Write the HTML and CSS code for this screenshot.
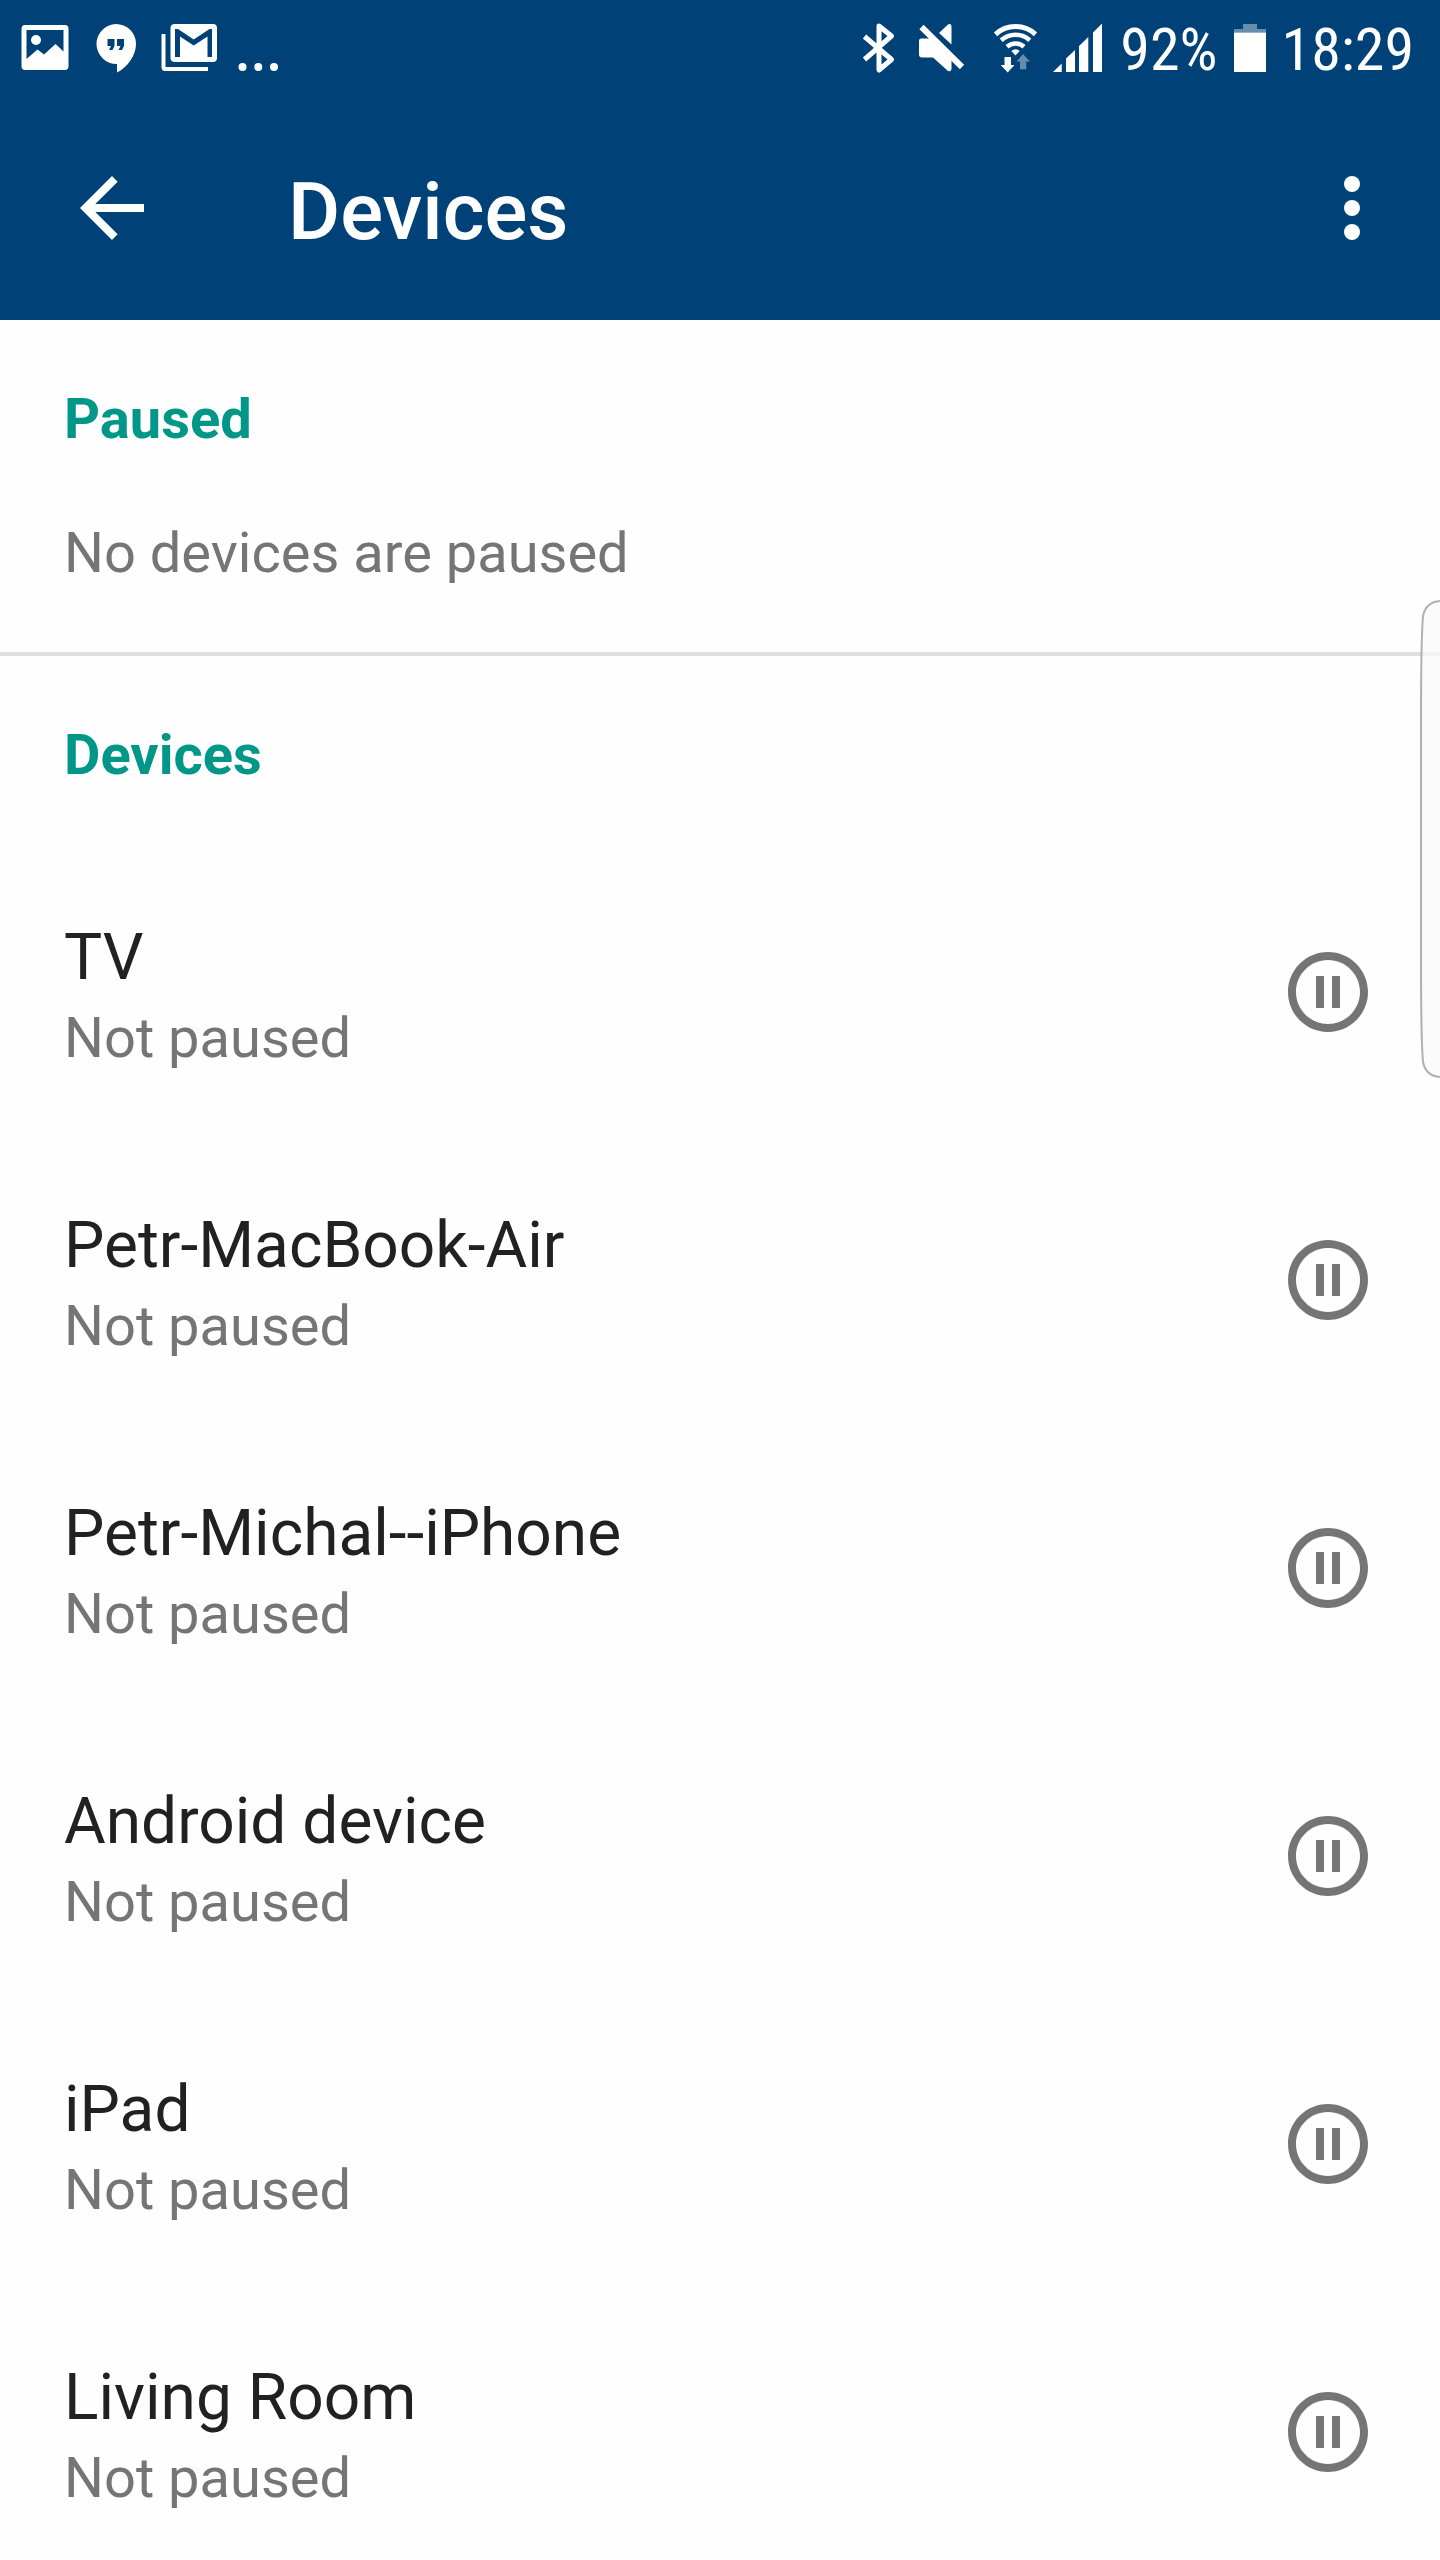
FILE: index.html
```html
<!DOCTYPE html>
<html lang="en">
<head>
  <meta charset="utf-8">
  <meta name="viewport" content="width=device-width, initial-scale=1">
  <title>Devices</title>
  <link rel="stylesheet" href="styles.css">
</head>
<body>
  <svg class="sprite" aria-hidden="true">
    <symbol id="pause" viewBox="0 0 24 24">
      <path d="M9 16h2V8H9v8zm3-14C6.48 2 2 6.48 2 12s4.480 10 10 10 10-4.480 10-10S17.520 2 12 2zm0 18c-4.410 0-8-3.590-8-8s3.590-8 8-8 8 3.590 8 8-3.590 8-8 8zm1-4h2V8h-2v8z"/>
    </symbol>
  </svg>
  <div class="app">
    <div class="status-bar">
      <div class="status-group">
        <svg class="status-icon" width="54" height="48" viewBox="20 24 54 48" role="img" aria-label="Picture">
          <path fill-rule="evenodd" d="M25 25H65Q68.500 25 68.500 29V66Q68.500 70 65 70H25Q21.500 70 21.500 66V29Q21.500 25 25 25ZM26.500 30V59L37.500 49.500L44 54.500L55.500 44L63.500 51.500V30Z"/>
          <circle cx="36" cy="40" r="5"/>
        </svg>
        <svg class="status-icon" width="52" height="48" viewBox="90 24 52 48" role="img" aria-label="Hangouts">
          <path fill-rule="evenodd" d="M116 24A20 20 0 0 1 136 44C136 55 128 67 117 72.500V64A20 20 0 1 1 116 24ZM107.500 39V46H111L109 50H112.500L114.500 46V39ZM117 39V46H120.500L118.500 50H122L124 46V39Z"/>
        </svg>
        <svg class="status-icon" width="62" height="48" viewBox="158 24 62 48" role="img" aria-label="Mail">
          <path fill-rule="evenodd" d="M175 24H213Q217 24 217 28V58Q217 62 213 62H175Q170.500 62 170.500 58V28Q170.500 24 175 24ZM175 29V57H180V36.500L193.700 45.500L207.500 36.500V57H212V29H209.500L193.700 39.500L178 29Z"/>
          <path d="M161.500 34H165.500V67H208V71H165Q161.500 71 161.500 67Z"/>
        </svg>
        <svg class="status-icon" width="44" height="48" viewBox="236 24 44 48" role="img" aria-label="More notifications">
          <circle cx="242.500" cy="67" r="4"/><circle cx="258.300" cy="67" r="4"/><circle cx="274" cy="67" r="4"/>
        </svg>
      </div>
      <div class="status-group">
        <svg class="status-icon" width="40" height="48" viewBox="860 24 40 48" role="img" aria-label="Bluetooth">
          <path class="line" stroke-width="5" stroke-linejoin="round" d="M865.500 36.500L892.500 59.500L880 70V26L892.500 36L865.500 59.500"/>
        </svg>
        <svg class="status-icon" width="54" height="48" viewBox="916 24 54 48" role="img" aria-label="Muted">
          <path d="M940 33L949 24.500Q952.500 23 952.500 27V44.500ZM922 38.500H936L952.500 55V69Q952 72 949 71L934 57.500H923Q920 57.500 920 54.500V41.500Q920 38.500 922 38.500Z"/>
          <path class="line" stroke-width="6" d="M922.500 27L963 67"/>
        </svg>
        <svg class="status-icon" width="51" height="48" viewBox="986 24 51 48" role="img" aria-label="Wi-Fi">
          <path class="line" stroke-width="5" d="M996.500 34.300A29.700 29.700 0 0 1 1036.500 34.300"/>
          <path class="line" stroke-width="4.500" d="M1002.200 40.300A21.500 21.500 0 0 1 1030.800 40.300"/>
          <path class="line" stroke-width="4.500" d="M1008 46.700A12.800 12.800 0 0 1 1025 46.700"/>
          <path d="M1016.500 55.500L1012.300 51Q1016.500 47.500 1020.700 51ZM1005.500 57H1012V65H1015.500L1008.700 72.500L1001.700 65H1005.500Z"/>
          <path opacity="0.4" d="M1017.500 61.500L1024 54L1031 61.500H1027.200V69.300H1021V61.500Z"/>
        </svg>
        <svg class="status-icon" width="52" height="48" viewBox="1053 24 52 48" role="img" aria-label="Signal">
          <path d="M1054 72L1062.700 63.500V72ZM1067 72V58.500L1076 50V72ZM1080 72V46L1089.300 37V72ZM1094 72V32.500L1103 23.500V72Z"/>
        </svg>
        <span class="status-text">92%</span>
        <svg class="status-icon" width="32" height="48" viewBox="1233 24 32 48" role="img" aria-label="Battery">
          <path opacity="0.4" d="M1242 24H1256V29H1265V32.500H1233V29H1242Z"/>
          <path d="M1233 32.500H1265V72H1233Z"/>
        </svg>
        <span class="status-text">18:29</span>
      </div>
    </div>

    <header class="app-bar">
      <button class="icon-button" type="button" aria-label="Back">
        <svg class="icon" viewBox="0 0 24 24"><path d="M20 11H7.830l5.590-5.590L12 4l-8 8 8 8 1.410-1.410L7.830 13H20v-2z"/></svg>
      </button>
      <h1 class="title">Devices</h1>
      <button class="icon-button" type="button" aria-label="More options">
        <svg class="icon" viewBox="0 0 24 24"><circle cx="12" cy="6" r="2"/><circle cx="12" cy="12" r="2"/><circle cx="12" cy="18" r="2"/></svg>
      </button>
    </header>

    <main class="content">
      <section class="section">
        <h2 class="section-title">Paused</h2>
        <p class="empty">No devices are paused</p>
      </section>
      <section class="section">
        <h2 class="section-title">Devices</h2>
        <ul class="devices">
          <li class="device">
            <div class="device-text"><div class="name">TV</div><div class="state">Not paused</div></div>
            <button class="icon-button" type="button" aria-label="Pause TV"><svg class="icon"><use href="#pause"/></svg></button>
          </li>
          <li class="device">
            <div class="device-text"><div class="name">Petr-MacBook-Air</div><div class="state">Not paused</div></div>
            <button class="icon-button" type="button" aria-label="Pause Petr-MacBook-Air"><svg class="icon"><use href="#pause"/></svg></button>
          </li>
          <li class="device">
            <div class="device-text"><div class="name">Petr-Michal--iPhone</div><div class="state">Not paused</div></div>
            <button class="icon-button" type="button" aria-label="Pause Petr-Michal--iPhone"><svg class="icon"><use href="#pause"/></svg></button>
          </li>
          <li class="device">
            <div class="device-text"><div class="name">Android device</div><div class="state">Not paused</div></div>
            <button class="icon-button" type="button" aria-label="Pause Android device"><svg class="icon"><use href="#pause"/></svg></button>
          </li>
          <li class="device">
            <div class="device-text"><div class="name">iPad</div><div class="state">Not paused</div></div>
            <button class="icon-button" type="button" aria-label="Pause iPad"><svg class="icon"><use href="#pause"/></svg></button>
          </li>
          <li class="device">
            <div class="device-text"><div class="name">Living Room</div><div class="state">Not paused</div></div>
            <button class="icon-button" type="button" aria-label="Pause Living Room"><svg class="icon"><use href="#pause"/></svg></button>
          </li>
        </ul>
      </section>
    </main>

    <svg class="edge-handle" width="20" height="480" viewBox="0 0 20 480" aria-hidden="true">
      <path d="M22 1Q6 1 3 16Q1 40 1 120V360Q1 440 3 462Q6 477 22 477"/>
    </svg>
  </div>
</body>
</html>
```

FILE: styles.css
```css
* {
  box-sizing: border-box;
}

body {
  margin: 0;
  background: #fefefe;
  font-family: "Roboto", sans-serif;
}

h1, h2, p, ul {
  margin: 0;
  padding: 0;
}

.sprite {
  display: none;
}

.app {
  position: relative;
  display: flex;
  flex-direction: column;
  height: 100vh;
  overflow: hidden;
}

/* System status bar */
.status-bar {
  display: flex;
  flex: none;
  justify-content: space-between;
  height: 96px;
  padding: 0 26px 0 20px;
  background: #004277;
  color: #fff;
}

.status-group {
  display: flex;
  align-items: center;
  gap: 16px;
}

.status-icon {
  flex: none;
  overflow: visible;
  fill: currentColor;
}

.status-icon .line {
  fill: none;
  stroke: currentColor;
}

.status-text {
  padding-top: 4px;
  font-family: "Roboto Condensed", "Roboto", sans-serif;
  font-size: 60px;
  line-height: 72px;
}

/* App bar */
.app-bar {
  display: flex;
  flex: none;
  align-items: center;
  height: 224px;
  padding: 0 40px 0 64px;
  background: #004277;
  color: #fff;
}

.title {
  flex: 1;
  padding: 8px 0 0 128px;
  font-size: 80px;
  font-weight: 500;
  line-height: 96px;
}

.icon-button {
  flex: none;
  width: 96px;
  height: 96px;
  padding: 0;
  border: 0;
  background: none;
  color: inherit;
}

.icon {
  display: block;
  width: 96px;
  height: 96px;
  fill: currentColor;
}

/* Scrolling content */
.content {
  flex: 1;
  min-height: 0;
  overflow-y: auto;
  scrollbar-width: none;
}

.section + .section {
  border-top: 4px solid #dfdfdf;
}

.section-title {
  padding: 59px 64px 53px;
  color: #009688;
  font-size: 56px;
  font-weight: 700;
  line-height: 80px;
}

.empty {
  padding: 1px 64px 59px;
  color: #757575;
  font-size: 56px;
  line-height: 80px;
}

.devices {
  list-style: none;
}

.device {
  display: flex;
  align-items: center;
  height: 288px;
  padding: 0 64px;
  color: #757575;
}

.device-text {
  flex: 1;
  padding-top: 12px;
  line-height: 80px;
}

.name {
  color: #212121;
  font-size: 64px;
}

.state {
  font-size: 56px;
}

/* Edge panel handle, floating over the list */
.edge-handle {
  position: absolute;
  top: 600px;
  right: 0;
  fill: rgba(249, 249, 249, 0.7);
  stroke: #b0b0b0;
  stroke-width: 2;
}
```
